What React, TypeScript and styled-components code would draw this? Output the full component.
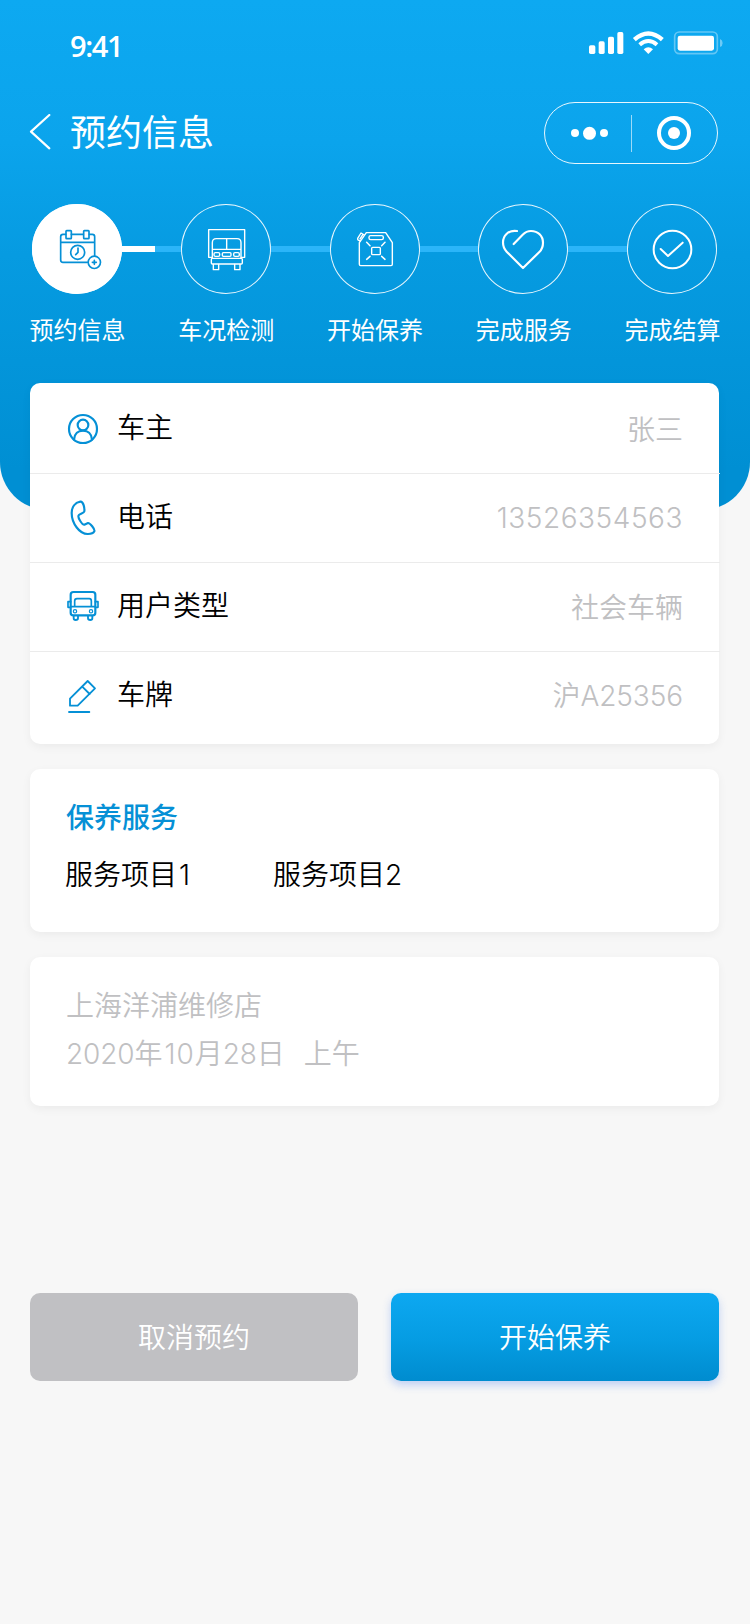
import React from "react";
import styled, { createGlobalStyle } from "styled-components";

const cjk = '"Noto Sans CJK SC", sans-serif';
const BLUE = "#0590d6";

const GlobalStyle = createGlobalStyle`
  * { box-sizing: border-box; }
  body { margin: 0; background: #f7f7f7; font-family: ${cjk}; }
  svg { display: block; fill: none; flex: none; }
`;

const Page = styled.div`
  width: 750px;
  height: 1624px;
  background: #f7f7f7;
  overflow: hidden;
`;

const Header = styled.header`
  height: 510px;
  border-radius: 0 0 48px 48px;
  background: linear-gradient(180deg, #0da9f1 0%, #0ba4ec 28%, #069be1 50%, #008fd3 92%, #008fd3 100%);
  color: #fff;
`;

const StatusBar = styled.div`
  height: 102px;
  padding: 30px 27px 0 70px;
  display: flex;
  justify-content: space-between;
  align-items: flex-start;
`;

const Clock = styled.span`
  margin-top: -1px;
  font: 600 29px/34px "Open Sans", sans-serif;
  letter-spacing: -1.4px;
`;

const NavBar = styled.div`
  height: 62px;
  padding: 0 32px 0 29px;
  display: flex;
  align-items: center;
`;

const Title = styled.h1`
  margin: 0 auto 7px 18px;
  font-size: 36px;
  font-weight: 400;
  line-height: 54px;
`;

const Capsule = styled.div`
  width: 174px;
  height: 62px;
  border: 1px solid rgba(255, 255, 255, 0.9);
  border-radius: 31px;
  display: flex;
  align-items: center;
  justify-content: center;
`;

const Steps = styled.div`
  margin: 40px 30px 0 32px;
  width: 685px;
  display: flex;
  align-items: flex-start;
`;

const StepItem = styled.div`
  width: 90px;
  display: flex;
  flex-direction: column;
  align-items: center;
`;

const StepCircle = styled.div<{ $active?: boolean }>`
  width: 90px;
  height: 90px;
  border-radius: 50%;
  background: ${(p) => (p.$active ? "#fff" : "transparent")};
  box-shadow: inset 0 0 0 1px rgba(255, 255, 255, 0.9);
`;

const StepLabel = styled.span`
  margin: 17px 0 0 1px;
  font-size: 24px;
  line-height: 36px;
  font-weight: 400;
  white-space: nowrap;
`;

const Connector = styled.div<{ $started?: boolean }>`
  flex: 1;
  height: 6px;
  margin-top: 42px;
  background: ${(p) =>
    p.$started ? "linear-gradient(90deg, #fff 33px, #2bb5f9 33px)" : "#2bb5f9"};
`;

const Content = styled.main`
  position: relative;
  margin: -127px 31px 0 30px;
  display: flex;
  flex-direction: column;
  gap: 25px;
`;

const Card = styled.section`
  background: #fff;
  border-radius: 10px;
  box-shadow: 0 3px 10px rgba(0, 0, 0, 0.05);
`;

const InfoRow = styled.div`
  height: 89px;
  padding: 0 37px 0 35px;
  margin-right: -1px;
  display: flex;
  align-items: center;
  border-bottom: 1px solid #ebebeb;
  &:first-child { height: 91px; padding-top: 2px; }
  &:last-child { height: 92px; padding-bottom: 4px; border-bottom: 0; }
`;

const InfoLabel = styled.span`
  margin: -6px auto 0 16px;
  color: #000;
  font-size: 28px;
  font-weight: 350;
  line-height: 42px;
`;

const InfoValue = styled.span`
  margin-top: -2px;
  color: #c0c0c2;
  font-size: 28px;
  font-weight: 350;
  line-height: 42px;
`;

const Digits = styled.span<{ $spacing?: number; $lead?: number }>`
  margin-left: ${(p) => p.$lead ?? 0}px;
  font-family: Inter, sans-serif;
  font-weight: 350;
  font-size: 28px;
  letter-spacing: ${(p) => p.$spacing ?? -0.1}px;
`;

const ServiceCard = styled(Card)`
  height: 163px;
  padding: 26px 35px;
`;

const ServiceTitle = styled.h2`
  margin: 0 0 0 1px;
  color: ${BLUE};
  font-size: 28px;
  font-weight: 500;
  line-height: 42px;
`;

const ServiceList = styled.div`
  margin-top: 15px;
  display: flex;
  color: #000;
  font-size: 28px;
  font-weight: 350;
  line-height: 42px;
`;

const ServiceItem = styled.span`
  width: 208px;
`;

const ShopCard = styled(Card)`
  height: 149px;
  padding: 23px 36px;
  color: #c0c0c2;
  font-size: 28px;
  font-weight: 350;
  line-height: 48px;
`;

const ShopLine = styled.div`
  height: 48px;
  white-space: nowrap;
`;

const Period = styled.span`
  margin-left: 19px;
`;

const Actions = styled.div`
  margin-top: 162px;
  display: flex;
  gap: 33px;
`;

const Button = styled.button<{ $primary?: boolean }>`
  flex: 1;
  height: 88px;
  padding: 0 0 2px;
  border: 0;
  border-radius: 10px;
  color: #fff;
  font: 350 28px/42px ${cjk};
  background: ${(p) =>
    p.$primary ? "linear-gradient(180deg, #0da8f1, #059ce2 55%, #008ccf)" : "#c0c0c3"};
  box-shadow: ${(p) => (p.$primary ? "0 4px 8px rgba(60, 120, 240, 0.3)" : "none")};
`;

const StatusIcons = () => (
  <svg width="134" height="25" viewBox="642 90 402 75">
    <g fill="#fff">
      <rect x="642" y="136" width="19" height="26" rx="5" />
      <rect x="671" y="124" width="18" height="38" rx="5" />
      <rect x="699" y="110" width="18" height="52" rx="5" />
      <rect x="727" y="96" width="18" height="66" rx="5" />
      <path d="M820 162 L806 148 Q820 136 834 148 Z" />
      <rect x="908" y="107" width="109" height="45" rx="7" />
    </g>
    <g stroke="#fff" strokeWidth="13">
      <path d="M778 119 Q820 82 862 119" />
      <path d="M794 134 Q820 112 846 134" strokeWidth="12" />
    </g>
    <rect x="899" y="96" width="128" height="65" rx="14" stroke="#fff" strokeOpacity=".36" strokeWidth="5" />
    <path d="M1035 117 Q1043 120 1043 129 Q1043 138 1035 141 Z" fill="#fff" fillOpacity=".4" />
  </svg>
);

const BackIcon = () => (
  <svg width="23" height="38" viewBox="87 342 69 114" stroke="#fff" strokeWidth="6.5" strokeLinecap="round" strokeLinejoin="round">
    <path d="M148 345 L93 395 L148 445" />
  </svg>
);

const CapsuleIcons = () => (
  <svg width="172" height="60" viewBox="510 309 516 180">
    <g fill="#fff">
      <circle cx="600" cy="399" r="12" />
      <circle cx="643.5" cy="400" r="19.5" />
      <circle cx="687" cy="399" r="12" />
      <circle cx="897" cy="399" r="18" />
    </g>
    <circle cx="897" cy="399" r="45" stroke="#fff" strokeWidth="12" />
    <path d="M769.5 345 V456" stroke="#fff" strokeOpacity=".6" strokeWidth="3" />
  </svg>
);

const StepIcon = ({ x, color = "#fff", width = 4.2, children }: {
  x: number; color?: string; width?: number; children: React.ReactNode;
}) => (
  <svg width="90" height="90" viewBox={`${x} 42 270 270`} stroke={color} strokeWidth={width} strokeLinecap="round" strokeLinejoin="round">
    {children}
  </svg>
);

const CalendarIcon = () => (
  <StepIcon x={96} color={BLUE} width={5}>
    <path d="M197 133 H189 Q182 133 182 140 V210 Q182 217 189 217 H262 M214 133 H250 M268 133 H277 Q284 133 284 140 V197 M182 157 H284" />
    <rect x="198" y="122" width="16" height="24" rx="2" />
    <rect x="251" y="122" width="16" height="24" rx="2" />
    <circle cx="233" cy="187" r="21" />
    <path d="M234 174 V187 L227 194" />
    <circle cx="283" cy="217" r="18.5" />
    <path d="M277 217 H289 M283 211 V223" />
  </StepIcon>
);

const TruckIcon = () => (
  <StepIcon x={543}>
    <path d="M636 202 H626 V119 H734 V202 H724" />
    <path d="M637 205 V158 Q637 146 649 146 H711 Q723 146 723 158 V205 M637 178 H723 M680 147 V178" />
    <rect x="634" y="205" width="93" height="17" rx="3" />
    <rect x="642" y="188" width="17" height="11" rx="4" />
    <rect x="667" y="188" width="26" height="11" rx="3" />
    <rect x="701" y="188" width="17" height="11" rx="4" />
    <path d="M640 223 V239 H656 V223 M704 223 V239 H720 V223" />
  </StepIcon>
);

const OilCanIcon = () => (
  <StepIcon x={150}>
    <path d="M238 158 L259 128 H317 L337 158 V223 Q337 227 333 227 H242 Q238 227 238 223 Z" />
    <path d="M253 135 L243 129 L233 145 Q232 149 236 151 L241 153 M249 133 L240 147" />
    <rect x="267" y="137" width="43" height="12" rx="5" />
    <rect x="275" y="172" width="26" height="22" rx="3" />
    <path d="M260 157 L270 167 M315 157 L305 167 M260 208 L270 199 M315 208 L305 199" strokeWidth="4.5" />
  </StepIcon>
);

const HeartIcon = () => (
  <StepIcon x={54} width={6.5}>
    <path d="M171 123 C143 119 129 139 129 157 C129 170 133 178 140 185 L189 234 L238 186 C247 177 249 169 249 158 C249 137 234 123 213 123 C202 123 195 127 188 134 L161 162" />
  </StepIcon>
);

const CheckIcon = () => (
  <StepIcon x={501} width={6}>
    <circle cx="637.5" cy="178.5" r="56.5" />
    <path d="M602 177 L624 198 L668 158" />
  </StepIcon>
);

const RowIcon = ({ children }: { children: React.ReactNode }) => (
  <svg width="36" height="36" viewBox="0 0 108 108" stroke={BLUE} strokeWidth="6.5" strokeLinecap="round" strokeLinejoin="round">
    {children}
  </svg>
);

const OwnerIcon = () => (
  <RowIcon>
    <circle cx="54" cy="54" r="42" />
    <circle cx="54" cy="42" r="16" />
    <path d="M27 86 C28 68 40 59 54 59 C68 59 80 68 81 86" />
  </RowIcon>
);

const PhoneIcon = () => (
  <RowIcon>
    <path d="M46 5 C29 8 20 22 20 39 C20 70 44 103 69 102 C79 102 86 98 88 94 C91 88 74 68 69 69 L58 74 C52 75 37 53 41 46 C44 40 57 40 58 34 C59 26 56 4 46 5 Z" />
  </RowIcon>
);

const BusIcon = () => (
  <RowIcon>
    <rect x="17" y="9" width="74" height="70" rx="8" />
    <path d="M17 53 H91 M29 52 V36 Q29 29 36 29 H73 Q79 29 79 36 V52 M17 38 H9 V55 H17 M91 38 H99 V55 H91" strokeWidth="5" />
    <circle cx="30" cy="67" r="5" strokeWidth="3.5" />
    <circle cx="78" cy="67" r="5" strokeWidth="3.5" />
    <path d="M26 81 V88 Q26 93 32 93 Q39 93 39 88 V81 M69 81 V88 Q69 93 76 93 Q82 93 82 88 V81" strokeWidth="5.5" />
  </RowIcon>
);

const PencilIcon = () => (
  <RowIcon>
    <path d="M15 62 L68 9 L90 31 L38 83 H15 Z M54 28 L74 48 M12 102 H73" strokeWidth="5.5" />
  </RowIcon>
);

const steps = [
  { label: "预约信息", icon: <CalendarIcon /> },
  { label: "车况检测", icon: <TruckIcon /> },
  { label: "开始保养", icon: <OilCanIcon /> },
  { label: "完成服务", icon: <HeartIcon /> },
  { label: "完成结算", icon: <CheckIcon /> },
];

const info = [
  { label: "车主", icon: <OwnerIcon />, value: "张三" },
  { label: "电话", icon: <PhoneIcon />, value: <Digits $spacing={0.55}>13526354563</Digits> },
  { label: "用户类型", icon: <BusIcon />, value: "社会车辆" },
  { label: "车牌", icon: <PencilIcon />, value: <>沪<Digits>A25356</Digits></> },
];

export default function App() {
  return (
    <Page>
      <GlobalStyle />
      <Header>
        <StatusBar>
          <Clock>9:41</Clock>
          <StatusIcons />
        </StatusBar>
        <NavBar>
          <BackIcon />
          <Title>预约信息</Title>
          <Capsule><CapsuleIcons /></Capsule>
        </NavBar>
        <Steps>
          {steps.map((s, i) => (
            <React.Fragment key={s.label}>
              {i > 0 && <Connector $started={i === 1} />}
              <StepItem>
                <StepCircle $active={i === 0}>{s.icon}</StepCircle>
                <StepLabel>{s.label}</StepLabel>
              </StepItem>
            </React.Fragment>
          ))}
        </Steps>
      </Header>
      <Content>
        <Card>
          {info.map((r) => (
            <InfoRow key={r.label}>
              {r.icon}
              <InfoLabel>{r.label}</InfoLabel>
              <InfoValue>{r.value}</InfoValue>
            </InfoRow>
          ))}
        </Card>
        <ServiceCard>
          <ServiceTitle>保养服务</ServiceTitle>
          <ServiceList>
            <ServiceItem>服务项目<Digits $lead={2}>1</Digits></ServiceItem>
            <ServiceItem>服务项目<Digits>2</Digits></ServiceItem>
          </ServiceList>
        </ServiceCard>
        <ShopCard>
          <ShopLine>上海洋浦维修店</ShopLine>
          <ShopLine>
            <Digits>2020</Digits>年<Digits $lead={2} $spacing={0.9}>10</Digits>月<Digits>28</Digits>日<Period>上午</Period>
          </ShopLine>
        </ShopCard>
        <Actions>
          <Button>取消预约</Button>
          <Button $primary>开始保养</Button>
        </Actions>
      </Content>
    </Page>
  );
}
